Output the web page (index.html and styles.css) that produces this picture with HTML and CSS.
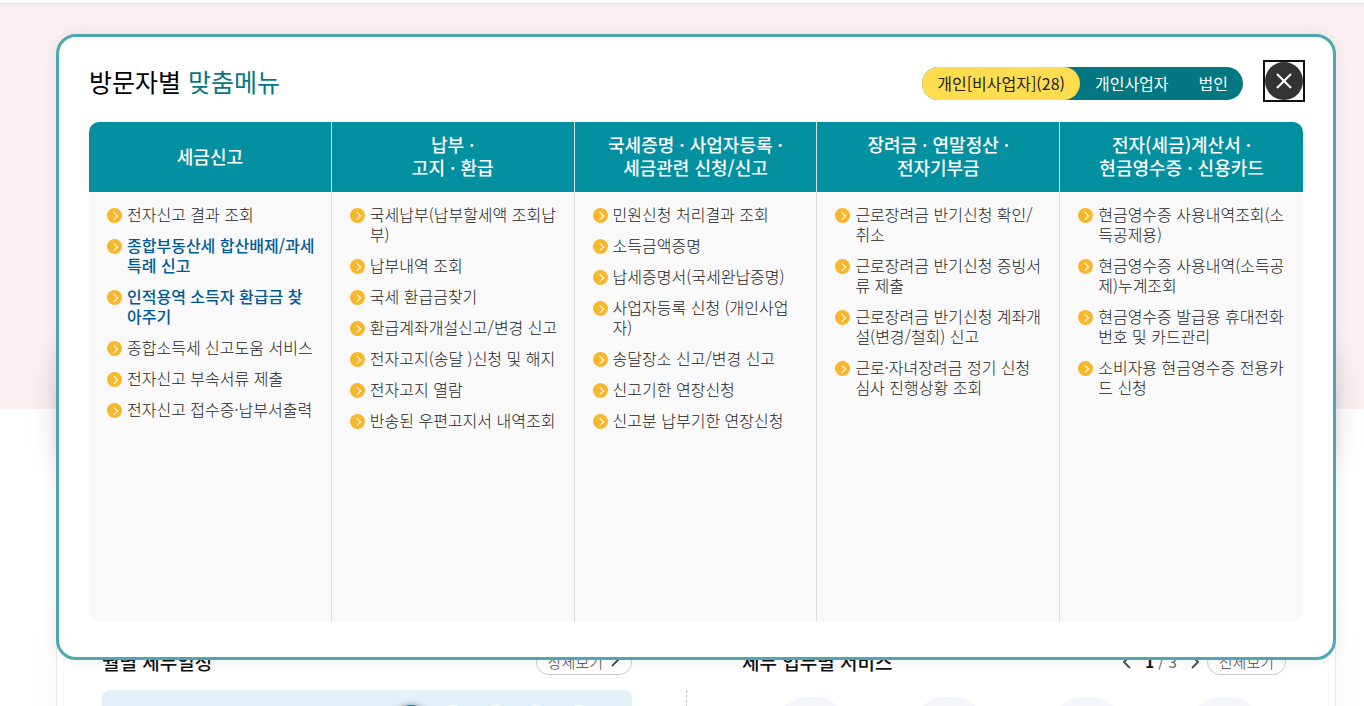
FILE: index.html
```
<!DOCTYPE html>
<html lang="ko">
<head>
<meta charset="utf-8">
<meta name="viewport" content="width=device-width, initial-scale=1">
<title>방문자별 맞춤메뉴</title>
<link rel="stylesheet" href="styles.css">
</head>
<body>
<div class="page">
  <div class="hero"><div class="hero-card"></div></div>
  <main class="content">
    <section class="schedule">
      <header class="section-head">
        <h2>월별 세무일정</h2>
        <button class="pill" type="button">상세보기
          <svg class="pill-icon" viewBox="0 0 10 10"><path d="M1 9l8-8M4 1h5"/></svg>
        </button>
      </header>
      <div class="calendar">
        <span class="dot active"></span><span class="dot"></span><span class="dot"></span><span class="dot"></span><span class="dot"></span>
      </div>
    </section>
    <section class="services">
      <header class="section-head">
        <h2>세무 업무별 서비스</h2>
        <div class="pager">
          <button class="arrow" type="button" aria-label="이전"><svg viewBox="0 0 8 14"><path d="M7 1L1 7l6 6"/></svg></button>
          <span class="count"><b>1</b> / 3</span>
          <button class="arrow" type="button" aria-label="다음"><svg viewBox="0 0 8 14"><path d="M1 1l6 6-6 6"/></svg></button>
          <button class="pill" type="button">전체보기</button>
        </div>
      </header>
      <div class="circles"><span></span><span></span><span></span><span></span></div>
    </section>
  </main>
</div>

<div class="modal" role="dialog" aria-labelledby="modal-title">
  <header class="modal-head">
    <h1 id="modal-title">방문자별 <em>맞춤메뉴</em></h1>
    <nav class="tabs">
      <button class="tab selected" type="button">개인[비사업자](28)</button>
      <button class="tab" type="button">개인사업자</button>
      <button class="tab" type="button">법인</button>
    </nav>
    <button class="close" type="button" aria-label="닫기">
      <svg viewBox="0 0 38 38"><circle cx="19" cy="19" r="19"/><path d="M12 12l14 14M26 12L12 26"/></svg>
    </button>
  </header>
  <div class="columns">
    <section class="column">
      <h2>세금신고</h2>
      <ul>
        <li><a href="#">전자신고 결과 조회</a></li>
        <li><a class="strong" href="#">종합부동산세 합산배제/과세<br>특례 신고</a></li>
        <li><a class="strong" href="#">인적용역 소득자 환급금 찾<br>아주기</a></li>
        <li><a href="#">종합소득세 신고도움 서비스</a></li>
        <li><a href="#">전자신고 부속서류 제출</a></li>
        <li><a href="#">전자신고 접수증·납부서출력</a></li>
      </ul>
    </section>
    <section class="column">
      <h2>납부 ·<br>고지 · 환급</h2>
      <ul>
        <li><a href="#">국세납부(납부할세액 조회납<br>부)</a></li>
        <li><a href="#">납부내역 조회</a></li>
        <li><a href="#">국세 환급금찾기</a></li>
        <li><a href="#">환급계좌개설신고/변경 신고</a></li>
        <li><a href="#">전자고지(송달 )신청 및 해지</a></li>
        <li><a href="#">전자고지 열람</a></li>
        <li><a href="#">반송된 우편고지서 내역조회</a></li>
      </ul>
    </section>
    <section class="column">
      <h2>국세증명 · 사업자등록 ·<br>세금관련 신청/신고</h2>
      <ul>
        <li><a href="#">민원신청 처리결과 조회</a></li>
        <li><a href="#">소득금액증명</a></li>
        <li><a href="#">납세증명서(국세완납증명)</a></li>
        <li><a href="#">사업자등록 신청 (개인사업<br>자)</a></li>
        <li><a href="#">송달장소 신고/변경 신고</a></li>
        <li><a href="#">신고기한 연장신청</a></li>
        <li><a href="#">신고분 납부기한 연장신청</a></li>
      </ul>
    </section>
    <section class="column">
      <h2>장려금 · 연말정산 ·<br>전자기부금</h2>
      <ul>
        <li><a href="#">근로장려금 반기신청 확인/<br>취소</a></li>
        <li><a href="#">근로장려금 반기신청 증빙서<br>류 제출</a></li>
        <li><a href="#">근로장려금 반기신청 계좌개<br>설(변경/철회) 신고</a></li>
        <li><a href="#">근로·자녀장려금 정기 신청<br>심사 진행상황 조회</a></li>
      </ul>
    </section>
    <section class="column">
      <h2>전자(세금)계산서 ·<br>현금영수증 · 신용카드</h2>
      <ul>
        <li><a href="#">현금영수증 사용내역조회(소<br>득공제용)</a></li>
        <li><a href="#">현금영수증 사용내역(소득공<br>제)누계조회</a></li>
        <li><a href="#">현금영수증 발급용 휴대전화<br>번호 및 카드관리</a></li>
        <li><a href="#">소비자용 현금영수증 전용카<br>드 신청</a></li>
      </ul>
    </section>
  </div>
</div>
</body>
</html>
```
FILE: styles.css
```
* { box-sizing: border-box; }
body {
  margin: 0;
  position: relative;
  background: #fff;
  color: #333;
  font-family: "Noto Sans CJK KR", sans-serif;
}
h1, h2, ul { margin: 0; padding: 0; }
button { font: inherit; color: inherit; border: 0; background: none; padding: 0; cursor: pointer; }

.page {
  display: flex;
  flex-direction: column;
  height: 100vh;
  padding-top: 3px;
  overflow: hidden;
}
.hero {
  flex: none;
  height: 406px;
  padding: 347px 28px 0 56px;
  border-top: 1px solid #e2e0e2;
  background: #faf0f1;
}
.hero-card { height: 120px; border-radius: 20px; box-shadow: 0 0 30px rgba(0, 0, 0, 0.12); }
.content {
  flex: 1;
  display: grid;
  grid-template-columns: 584px 1fr;
  margin: 191px 28px 0 56px;
  padding: 48px 49px 0 45px;
  background: #fff;
  border: 1px solid #e8e8e8;
  border-bottom: 0;
  border-radius: 20px 20px 0 0;
  box-shadow: 0 10px 30px rgba(0, 0, 0, 0.04);
}
.schedule, .services { display: flex; flex-direction: column; }
.schedule { padding-right: 54px; }
.section-head { display: flex; align-items: center; justify-content: space-between; height: 26px; }
.section-head h2 { font-size: 19px; line-height: 26px; font-weight: 500; color: #111; }
.services .section-head { padding-left: 56px; }
.pill {
  display: inline-flex;
  align-items: center;
  gap: 8px;
  height: 26px;
  padding: 0 11px;
  border: 1px solid #ccc;
  border-radius: 13px;
  background: #fff;
  font-size: 15px;
  line-height: 20px;
  font-weight: 300;
  color: #444;
}
.pill-icon { width: 9px; height: 9px; fill: none; stroke: #444; stroke-width: 2; }
.calendar {
  flex: 1;
  display: flex;
  gap: 6px;
  margin-top: 15px;
  padding: 15px 0 0 291px;
  border-radius: 8px 8px 0 0;
  background: #e2f1f9;
  overflow: hidden;
}
.dot { flex: none; width: 36px; height: 36px; border-radius: 50%; background: #fff; }
.dot.active { background: #037f8e; box-shadow: 0 0 6px rgba(0, 0, 0, 0.4); }
.pager { display: flex; align-items: center; }
.arrow { display: flex; width: 8px; height: 14px; }
.arrow svg { width: 8px; height: 14px; fill: none; stroke: #555; stroke-width: 2; }
.count { margin: 0 14px; font-size: 15px; line-height: 26px; color: #666; }
.count b { color: #111; }
.pager .pill { margin-left: 8px; }
.circles {
  flex: 1;
  display: flex;
  justify-content: space-between;
  margin-top: 15px;
  padding: 7px 26px 0 89px;
  border-left: 1px dashed #bbb;
  overflow: hidden;
}
.circles span { flex: none; width: 70px; height: 70px; border-radius: 30px; background: #f5f6fb; }

.modal {
  position: absolute;
  top: 34px;
  left: 56px;
  right: 28px;
  padding: 23px 30px 35px;
  border: 3px solid #4ea8b0;
  border-radius: 20px;
  background: #fff;
  box-shadow: 0 0 15px rgba(0, 0, 0, 0.08);
}
.modal-head { display: flex; align-items: center; height: 42px; margin-bottom: 20px; }
h1 { margin-right: auto; font-size: 25px; line-height: 42px; font-weight: 400; color: #000; }
h1 em { font-style: normal; color: #037782; }
.tabs { display: flex; height: 33px; margin: 4px 20px 0 0; border-radius: 17px; background: #037782; }
.tab { padding: 0 15px; font-size: 16px; line-height: 32px; font-weight: 400; color: #fff; }
.tab.selected { border-radius: 17px; background: #ffdc50; color: #222; }
.close { width: 42px; height: 42px; margin-right: -2px; border: 2px solid #111; background: #fff; }
.close svg { display: block; width: 38px; height: 38px; fill: #333; }
.close path { stroke: #fff; stroke-width: 2; }
.columns {
  display: grid;
  grid-template-columns: repeat(5, 1fr);
  min-height: 500px;
  border-radius: 10px;
  overflow: hidden;
  background: #f9f9f9;
}
.column { border-right: 1px solid #ddd; }
.column:last-child { border-right: 0; }
.column h2 {
  display: flex;
  align-items: center;
  justify-content: center;
  height: 70px;
  padding-bottom: 2px;
  background: #0390a1;
  color: #fff;
  font-size: 18px;
  line-height: 23px;
  font-weight: 500;
  text-align: center;
}
.column ul { display: grid; gap: 11px; padding: 12px 0 0 18px; list-style: none; }
.column li {
  position: relative;
  padding-left: 20px;
  font-size: 16px;
  line-height: 20px;
  font-weight: 300;
  white-space: nowrap;
}
.column li::before {
  content: "";
  position: absolute;
  left: 0;
  top: 4px;
  width: 15px;
  height: 15px;
  border-radius: 50%;
  background: #f8b62b;
}
.column li::after {
  content: "";
  position: absolute;
  left: 4px;
  top: 9px;
  width: 5px;
  height: 5px;
  border: solid #fff;
  border-width: 1px 1px 0 0;
  transform: rotate(45deg);
}
.column a { color: #222; text-decoration: none; }
.column a.strong { color: #005a96; font-weight: 500; }
```
